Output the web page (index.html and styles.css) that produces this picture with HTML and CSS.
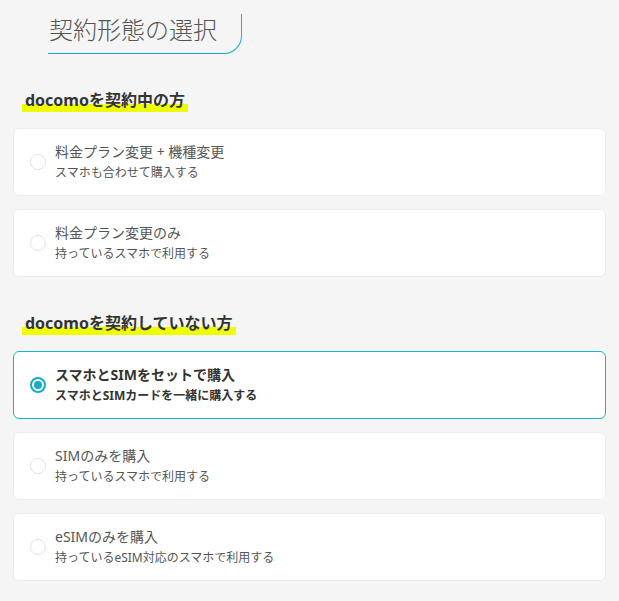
FILE: index.html
```html
<!DOCTYPE html>
<html lang="ja">
<head>
<meta charset="utf-8">
<title>契約形態の選択</title>
<link rel="stylesheet" href="styles.css">
</head>
<body>
<div class="page">
  <h1 class="title">契約形態の選択</h1>

  <section class="group">
    <h2 class="group-head"><span class="mark">docomoを契約中の方</span></h2>
    <div class="options">
      <label class="option">
        <span class="radio"></span>
        <span class="texts">
          <span class="opt-title">料金プラン変更 + 機種変更</span>
          <span class="opt-sub">スマホも合わせて購入する</span>
        </span>
      </label>
      <label class="option">
        <span class="radio"></span>
        <span class="texts">
          <span class="opt-title">料金プラン変更のみ</span>
          <span class="opt-sub">持っているスマホで利用する</span>
        </span>
      </label>
    </div>
  </section>

  <section class="group group-second">
    <h2 class="group-head"><span class="mark">docomoを契約していない方</span></h2>
    <div class="options">
      <label class="option selected">
        <span class="radio"></span>
        <span class="texts">
          <span class="opt-title">スマホとSIMをセットで購入</span>
          <span class="opt-sub">スマホとSIMカードを一緒に購入する</span>
        </span>
      </label>
      <label class="option">
        <span class="radio"></span>
        <span class="texts">
          <span class="opt-title">SIMのみを購入</span>
          <span class="opt-sub">持っているスマホで利用する</span>
        </span>
      </label>
      <label class="option">
        <span class="radio"></span>
        <span class="texts">
          <span class="opt-title">eSIMのみを購入</span>
          <span class="opt-sub">持っているeSIM対応のスマホで利用する</span>
        </span>
      </label>
    </div>
  </section>
</div>
</body>
</html>
```

FILE: styles.css
```css
html, body {
  margin: 0;
  padding: 0;
  background: #f5f5f5;
}
body {
  font-family: "Noto Sans", "Noto Sans CJK JP", sans-serif;
  color: #444;
}
.page {
  padding: 14px 13px 0 13px;
  display: flex;
  flex-direction: column;
}
.title {
  align-self: flex-start;
  margin: 0 0 0 35px;
  padding: 0 24px 7px 1px;
  font-size: 24px;
  line-height: 32px;
  font-weight: 300;
  color: #555;
  border-right: 1px solid #1cb4d0;
  border-bottom: 1px solid #17a5cc;
  border-bottom-right-radius: 18px;
}
.group {
  margin-top: 35px;
  display: flex;
  flex-direction: column;
}
.group-second {
  margin-top: 35px;
}
.group-head {
  margin: 0 0 16px 9px;
  font-size: 16px;
  font-weight: 700;
  line-height: 23px;
  color: #333;
}
.mark {
  display: inline-block;
  padding: 0 3px;
  background: linear-gradient(transparent 65%, #eeff00 65%);
}
.options {
  display: flex;
  flex-direction: column;
  gap: 13px;
}
.option {
  display: flex;
  align-items: center;
  gap: 9px;
  padding: 12px 16px;
  background: #fff;
  border: 1px solid #ececec;
  border-radius: 6px;
}
.radio {
  flex: none;
  width: 16px;
  height: 16px;
  box-sizing: border-box;
  border: 1px solid #e2e2e2;
  border-radius: 50%;
  background: #fff;
  display: flex;
  align-items: center;
  justify-content: center;
}
.texts {
  display: flex;
  flex-direction: column;
}
.opt-title {
  font-size: 14px;
  line-height: 22px;
  color: #555;
}
.opt-sub {
  font-size: 12px;
  line-height: 20px;
  color: #555;
}
.option.selected {
  border-color: #1ab3cc;
}
.option.selected .radio {
  border: 2px solid #12aec8;
}
.option.selected .radio::after {
  content: "";
  width: 8px;
  height: 8px;
  border-radius: 50%;
  background: #12aec8;
}
.option.selected .opt-title,
.option.selected .opt-sub {
  font-weight: 700;
  color: #333;
}
```
